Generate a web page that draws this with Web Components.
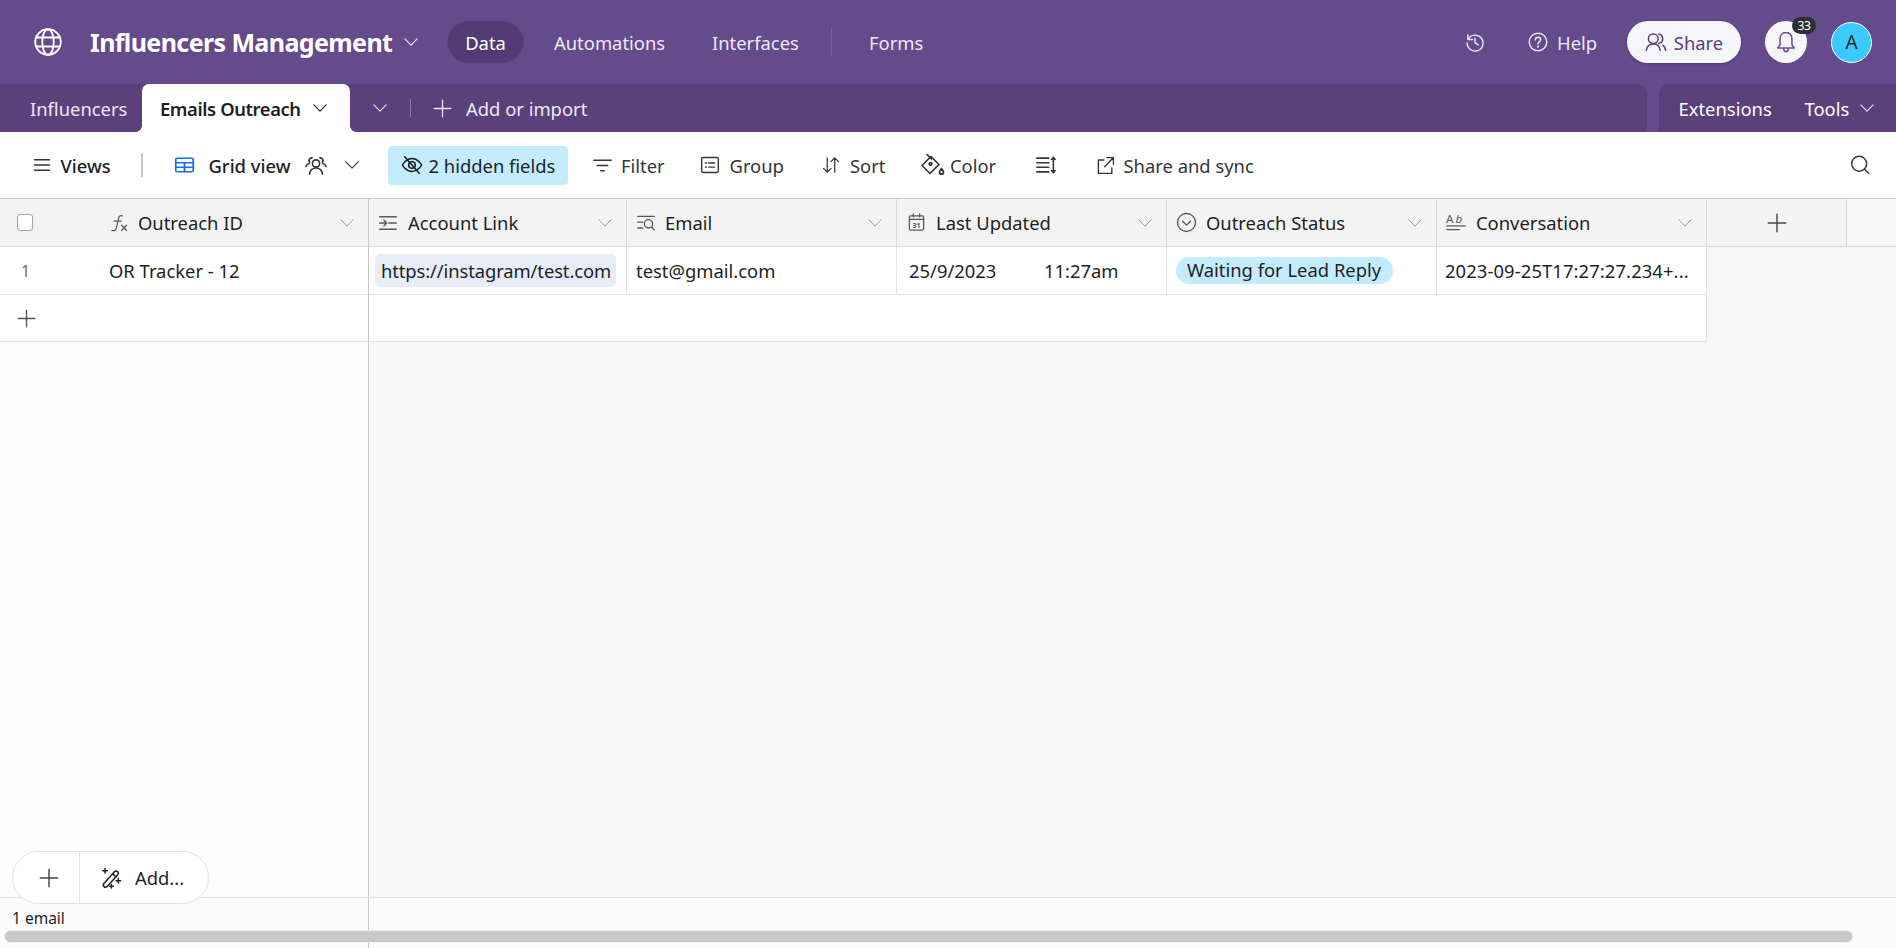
<!DOCTYPE html>
<html lang="en"><head><meta charset="utf-8"><title>Influencers Management</title>
<style>
html,body{margin:0;height:100%;overflow:hidden}
body{font-family:"Noto Sans","Open Sans","Liberation Sans",sans-serif;font-size:18.4px;color:#1d1f25;display:flex;flex-direction:column;height:948px;width:1896px;background:#fff}
</style></head><body>
<app-topbar></app-topbar>
<app-tabbar></app-tabbar>
<app-toolbar></app-toolbar>
<grid-view></grid-view>
<script>
const ICONS={
globe:'<circle cx="12" cy="12" r="10.2"/><ellipse cx="12" cy="12" rx="4.6" ry="10.2"/><path d="M2.8 8.4h18.4M2.8 15.6h18.4"/>',
chevron:'<path d="M1.500 6.500L12 17.500 22.500 6.500"/>',
plus:'<path d="M12 1.500v21M1.500 12h21"/>',
menu:'<path d="M2 5h20M2 12h20M2 19h20"/>',
grid:'<rect x="2" y="3" width="20" height="18" rx="1.8" stroke="#166ee1" stroke-width="2"/><path d="M2 9h20M2 15h20M12 9v12" stroke="#166ee1" stroke-width="2"/>',
people:'<circle cx="12" cy="10.5" r="3.6"/><path d="M5.5 21c.6-4 3-6 6.5-6s5.900 2 6.500 6"/><path d="M8 4.800a2.700 2.700 0 0 0-2.400 4.400M2 13.500c.5-1.600 1.600-2.600 3-3M16 4.800a2.700 2.700 0 0 1 2.400 4.400M22 13.500c-.5-1.600-1.600-2.600-3-3"/>',
eyeoff:'<path d="M1.500 12s3.800-7 10.500-7 10.500 7 10.500 7-3.800 7-10.500 7-10.500-7-10.500-7z"/><circle cx="12" cy="12" r="3.600"/><path d="M4 3l16 18"/>',
filter:'<path d="M2 6h20M6 12h12M10 18h4"/>',
group:'<rect x="2" y="3" width="20" height="18" rx="2"/><path d="M10.500 9.500h7M10.500 14.500h7M6.500 9.500h1.500M6.500 14.500h1.500"/>',
sort:'<path d="M7 2.500v19M2 16.500L7 21.500l5-5M17 21.500v-19M12 7.500l5-5 5 5"/>',
color:'<path d="M11 3.500L2 12.500l8 8 9-9z"/><path d="M7 1.500l4.500 4.500"/><circle cx="10.500" cy="11" r="1.300"/><path d="M21.500 15.500c1.300 1.800 2 2.800 2 3.700a2 2 0 0 1-4 0c0-.9.700-1.900 2-3.700z"/>',
rows:'<path d="M2 4.500h13M2 9.500h13M2 14.500h13M2 19.500h13"/><path d="M20 3.500v17M18 6l2-2.500L22 6M18 18l2 2.500 2-2.500" />',
share:'<path d="M10 5H3v17h17v-7"/><path d="M13.500 2H22v8.500M22 2L11 13.500"/>',
search:'<circle cx="11" cy="10.500" r="9"/><path d="M17.500 17l5 5"/>',
history:'<path d="M3.500 3.500v5.500H9"/><path d="M3.800 8.500A9.600 9.600 0 1 1 2.500 13"/><path d="M12 7v6l4 2.500"/>',
help:'<circle cx="12" cy="12" r="10.500"/><path d="M8.800 9.500c0-1.900 1.400-3.200 3.200-3.200s3.200 1.200 3.200 3c0 2.500-3.200 2.600-3.200 5"/><circle cx="12" cy="17.600" r=".5"/>',
sharepeople:'<circle cx="9" cy="8.500" r="5.300"/><path d="M1.500 21c.5-4 3.300-6.800 7.500-6.800s7 2.800 7.500 6.800"/><path d="M15 3.300a5.300 5.300 0 0 1 0 10.400M19.500 15.500c1.600 1.300 2.600 3.200 3 5.500"/>',
bell:'<path d="M12 1.500c-3.800 0-6.500 3-6.500 7v6.500l-2.500 3.500h18l-2.500-3.500V8.500c0-4-2.700-7-6.500-7z"/><path d="M9.500 19c0 1.900 1.100 3.500 2.500 3.500s2.500-1.600 2.500-3.500"/>',
fx:'<path d="M16.500 2.500c-2.800-1-4.500.2-5 3L8.500 19c-.5 2.800-2.500 3.800-6 3M5.500 9.500h9.500"/><path d="M15.500 15l6.500 7M22 15l-6.500 7" stroke-width="1.800"/>',
link:'<path d="M2 4.500h20M13 12h9M2 19.500h20M2 12h8M7 8.500l3.500 3.500L7 15.500"/>',
emailfield:'<path d="M2 4h20M2 11h6M2 18h6"/><circle cx="15" cy="13" r="5"/><path d="M18.500 16.500L22 20.500"/>',
dropdown:'<circle cx="12" cy="12" r="10.300"/><path d="M7.500 10.500l4.500 4.500 4.500-4.500"/>',
calendar:'<rect x="3" y="3.500" width="18" height="18" rx="1.500"/><path d="M3 8h18M8 1v4M16 1v4"/><text x="12" y="18.500" font-size="9" font-weight="700" text-anchor="middle" fill="currentColor" stroke="none" font-family="Noto Sans">31</text>',
text:'<text x="0" y="12" font-size="14" fill="currentColor" stroke="none" font-family="Noto Sans">A</text><text x="11.500" y="12" font-size="14" font-style="italic" fill="currentColor" stroke="none" font-family="Noto Sans">b</text><path d="M1 15.500h22M1 20h15"/>',
wand:'<rect x="-2" y="-11" width="4.800" height="22" rx="2.400" transform="translate(11.500 13) rotate(42)"/><path d="M14 7.500l3.500 3.500"/><path d="M5.500 1.500v5M3 4h5M20 12.500v5M17.500 15h5M12.500 19v4M10.500 21h4"/>'
};
customElements.define('ui-icon',class extends HTMLElement{
 connectedCallback(){
  const s=this.getAttribute('size')||20,sw=this.getAttribute('sw')||1.7,h=this.getAttribute('h')||s;
  this.attachShadow({mode:'open'}).innerHTML=`<style>:host{display:inline-flex;flex:none;width:${s}px;height:${h}px;align-items:center;justify-content:center}svg{width:100%;height:100%;overflow:visible;display:block}</style><svg viewBox="0 0 24 24" preserveAspectRatio="none" fill="none" stroke="currentColor" stroke-width="${sw}" stroke-linecap="round" stroke-linejoin="round">${ICONS[this.getAttribute('name')]}</svg>`;
 }
});
customElements.define('app-topbar',class extends HTMLElement{
 constructor(){super();this.attachShadow({mode:'open'}).innerHTML=`<style>
 :host{display:flex;flex:none;align-items:center;height:84px;padding-left:33px;padding-right:24px;box-sizing:border-box;background:#634b8c;color:#fff;white-space:nowrap}
 .t{flex:none;display:block;color:#eee9f5}
 .title{margin-left:27px;width:303px;font-size:25px;font-weight:700;color:#fff;letter-spacing:-.6px}
 .data{margin-left:29px;width:77px;height:42px;box-sizing:border-box;border-radius:21px;background:#523b74;border:1px solid #5b4380;display:flex;align-items:center;justify-content:center;flex:none;color:#fff}
 .div{flex:none;width:1px;height:30px;background:#75609a;margin-left:36px}
 .sp{flex:1}
 .share{margin-left:30px;flex:none;width:114px;height:42px;border-radius:21px;background:#f6f5f8;color:#5a417c;display:flex;align-items:center;justify-content:center;gap:7px;box-shadow:0 1px 3px rgba(0,0,0,.2)}
 .bell{margin-left:24px;flex:none;width:42px;height:42px;border-radius:21px;background:#f6f5f8;color:#6a5293;display:flex;align-items:center;justify-content:center;position:relative}
 .badge{position:absolute;left:27px;top:-4px;width:24px;height:17px;border-radius:9px;background:#2f2f33;color:#fff;font-size:12px;line-height:17px;text-align:center;letter-spacing:-.3px}
 .av{margin-left:24px;flex:none;width:41px;height:41px;box-sizing:border-box;border-radius:50%;background:#39caff;border:1.5px solid #fff;color:#1d1f25;display:flex;align-items:center;justify-content:center;font-size:19px}
 </style>
 <ui-icon name="globe" size="30" sw="1.500"></ui-icon>
 <span class="t title">Influencers Management</span>
 <ui-icon name="chevron" size="14" sw="1.800" style="margin-left:11px;color:#eee9f5"></ui-icon>
 <div class="data">Data</div>
 <span class="t" style="margin-left:30px;width:110px">Automations</span>
 <span class="t" style="margin-left:48px;width:83px">Interfaces</span>
 <span class="div"></span>
 <span class="t" style="margin-left:37px;width:52px">Forms</span>
 <span class="sp"></span>
 <ui-icon name="history" size="20" style="color:#eee9f5"></ui-icon>
 <ui-icon name="help" size="20" style="margin-left:43px;color:#eee9f5"></ui-icon>
 <span class="t" style="margin-left:9px;width:40px">Help</span>
 <div class="share"><ui-icon name="sharepeople" size="22"></ui-icon><span>Share</span></div>
 <div class="bell"><ui-icon name="bell" size="22" sw="1.700"></ui-icon><span class="badge">33</span></div>
 <div class="av">A</div>`}
});
customElements.define('app-tabbar',class extends HTMLElement{
 constructor(){super();this.attachShadow({mode:'open'}).innerHTML=`<style>
 :host{display:flex;flex:none;height:48px;background:#634b8c;color:#eee9f5;white-space:nowrap;gap:12px}
 .sec{display:flex;align-items:center;background:#5a417c;height:48px;border-radius:0 10px 0 0}
 .l{width:1647px}
 .r{flex:1;border-radius:10px 0 0 0}
 .t{flex:none;display:block}
 .active{position:relative;flex:none;display:flex;align-items:center;width:208px;height:48px;box-sizing:border-box;padding-left:18px;margin-left:18px;background:#fff;border-radius:7px 7px 0 0;color:#1d1f25;font-weight:600;letter-spacing:-.4px}
 .active:before,.active:after{content:"";position:absolute;bottom:0;width:6px;height:6px;background:radial-gradient(circle at 0 0,transparent 5.500px,#fff 6px)}
 .active:before{left:-6px}
 .active:after{right:-6px;background:radial-gradient(circle at 100% 0,transparent 5.500px,#fff 6px)}
 .div{flex:none;width:1px;height:18px;background:#8a76a8;margin-left:23px}
 </style>
 <div class="sec l">
  <span class="t" style="margin-left:30px;width:94px">Influencers</span>
  <div class="active"><span style="width:154px;flex:none">Emails Outreach</span><ui-icon name="chevron" size="14" sw="2" style="margin-left:-1px"></ui-icon></div>
  <ui-icon name="chevron" size="14" sw="1.800" style="margin-left:23px"></ui-icon>
  <span class="div"></span>
  <ui-icon name="plus" size="19" sw="1.600" style="margin-left:22px"></ui-icon>
  <span class="t" style="margin-left:14px;width:122px">Add or import</span>
 </div>
 <div class="sec r">
  <span class="t" style="margin-left:19.500px;width:90px;color:#fff">Extensions</span>
  <span class="t" style="margin-left:36px;width:44px;color:#fff">Tools</span>
  <ui-icon name="chevron" size="14" sw="1.800" style="margin-left:11px"></ui-icon>
 </div>`}
});
customElements.define('app-toolbar',class extends HTMLElement{
 constructor(){super();this.attachShadow({mode:'open'}).innerHTML=`<style>
 :host{display:flex;flex:none;align-items:center;height:67px;background:#fff;color:#33353b;white-space:nowrap;padding-left:33px;box-sizing:border-box;border-bottom:1.500px solid #d0d0d0}
 .t{flex:none;display:block}
 .b{font-weight:500;color:#1d1f25}
 .div{flex:none;width:2px;height:24px;background:#c9c9c9;margin-left:29px}
 .hid{flex:none;display:flex;align-items:center;margin-left:30px;width:180px;height:39px;box-sizing:border-box;padding-left:13px;border-radius:4px;background:#c4ecff;color:#1d1f25}
 .sp{flex:1}
 </style>
 <ui-icon name="menu" size="18" sw="1.800"></ui-icon>
 <span class="t b" style="margin-left:9.500px;width:51px">Views</span>
 <span class="div"></span>
 <ui-icon name="grid" size="21" h="18" style="margin-left:31px"></ui-icon>
 <span class="t b" style="margin-left:14px;width:83px">Grid view</span>
 <ui-icon name="people" size="24" style="margin-left:12px"></ui-icon>
 <ui-icon name="chevron" size="14" sw="2" style="margin-left:17px"></ui-icon>
 <div class="hid" style="margin-left:29px"><ui-icon name="eyeoff" size="22"></ui-icon><span class="t" style="margin-left:6px;width:128px">2 hidden fields</span></div>
 <ui-icon name="filter" size="21" style="margin-left:24.500px"></ui-icon>
 <span class="t" style="margin-left:8px;width:41px">Filter</span>
 <ui-icon name="group" size="20" style="margin-left:38px"></ui-icon>
 <span class="t" style="margin-left:9.500px;width:53px">Group</span>
 <ui-icon name="sort" size="18" style="margin-left:39.500px"></ui-icon>
 <span class="t" style="margin-left:10px;width:34px">Sort</span>
 <ui-icon name="color" size="24" style="margin-left:35.500px"></ui-icon>
 <span class="t" style="margin-left:6.500px;width:46px">Color</span>
 <ui-icon name="rows" size="22" style="margin-left:38.500px"></ui-icon>
 <ui-icon name="share" size="19" style="margin-left:39px"></ui-icon>
 <span class="t" style="margin-left:9px;width:128px">Share and sync</span>
 <span class="sp"></span>
 <ui-icon name="search" size="20" style="margin-right:26px"></ui-icon>`}
});
customElements.define('grid-head',class extends HTMLElement{
 constructor(){super();const i=this.getAttribute('icon'),w=this.getAttribute('w'),pl=this.getAttribute('pl')||8,iw=this.getAttribute('iw')||20,gap=this.getAttribute('gap')||9;
 this.attachShadow({mode:'open'}).innerHTML=`<style>
 :host{display:flex;flex:none;align-items:center;box-sizing:border-box;width:${w}px;height:100%;border-right:1px solid #d9d9d9;padding-left:${pl}px;padding-right:14px;white-space:nowrap}
 ui-icon{color:#55595f}
 .n{flex:1;padding-left:${gap}px}
 .c{color:#8a8d93}
 </style><ui-icon name="${i}" size="${iw}" sw="1.600"></ui-icon><span class="n"><slot></slot></span><ui-icon class="c" name="chevron" size="14" sw="1.500"></ui-icon>`}
});
customElements.define('grid-cell',class extends HTMLElement{
 constructor(){super();const w=this.getAttribute('w'),pl=this.getAttribute('pl')||8;
 this.attachShadow({mode:'open'}).innerHTML=`<style>
 :host{display:flex;flex:none;align-items:center;box-sizing:border-box;width:${w}px;height:100%;border-right:1px solid #e3e3e3;padding-left:${pl}px;white-space:nowrap;overflow:hidden}
 </style><slot></slot>`}
});
customElements.define('add-pill',class extends HTMLElement{
 constructor(){super();this.attachShadow({mode:'open'}).innerHTML=`<style>
 :host{position:absolute;left:12px;top:-47px;width:197px;height:53px;box-sizing:border-box;border:1.500px solid #e3e3e3;border-radius:27px;background:#fff;display:flex;align-items:center;color:#1d1f25;z-index:3}
 .a{width:67px;height:100%;box-sizing:border-box;border-right:1.500px solid #e3e3e3;display:flex;align-items:center;justify-content:center;padding-left:6px;color:#41454d}
 .b{display:flex;align-items:center;padding-left:20px;gap:13px}
 </style><div class="a"><ui-icon name="plus" size="20" sw="1.700"></ui-icon></div><div class="b"><ui-icon name="wand" size="22" sw="1.600"></ui-icon><span>Add...</span></div>`}
});
customElements.define('grid-view',class extends HTMLElement{
 constructor(){super();this.attachShadow({mode:'open'}).innerHTML=`<style>
 :host{display:flex;flex-direction:column;flex:1;min-height:0;position:relative;background:#f7f7f7}
 .main{flex:1;display:flex;min-height:0}
 .left{flex:none;width:369px;box-sizing:border-box;background:#fcfcfc;border-right:1px solid #c8c8c8}
 .right{flex:1;min-width:0}
 .row{display:flex;box-sizing:border-box}
 .h{height:48px;background:#f3f3f3;border-bottom:1.500px solid #d6d6d6}
 .d{height:48px;background:#fff;border-bottom:1.500px solid #e3e3e3}
 .a{height:47px;background:#fff;border-bottom:1.500px solid #e3e3e3;align-items:center;padding-left:17px;color:#555}
 .right .a{width:1338px;border-right:1px solid #e3e3e3;padding:0}
 .check{width:16px;height:17px;box-sizing:border-box;border:1.300px solid #a5a5a5;border-radius:3px;background:#fff;margin-left:17px;flex:none;align-self:center}
 .pn{flex:none;align-self:center;color:#6d6f75;margin-left:21px;font-size:16px;width:88px}
 .chip{display:block;height:33px;line-height:33px;width:241px;box-sizing:border-box;padding-left:6px;border-radius:5px;background:#e8ecf7;letter-spacing:-.1px}
 .pill{display:block;height:27px;line-height:26px;width:217px;box-sizing:border-box;padding-left:11px;border-radius:14px;background:#c4ecff}
 .foot{flex:none;height:51px;display:flex;background:#fbfbfb;border-top:1.500px solid #e3e3e3;box-sizing:border-box;position:relative}
 .fl{width:369px;box-sizing:border-box;border-right:1px solid #c8c8c8;padding:10px 0 0 12px;font-size:15.500px;line-height:20px}
 .scroll{position:absolute;left:4px;right:43px;top:32px;height:13px;box-sizing:border-box;background:#c8c8c8;border:1px solid #efefef;border-radius:7px;z-index:2}
 .fill{flex:1;background:#f7f7f7}
 .col{display:flex;flex-direction:column}
 </style>
 <div class="main">
  <div class="left col">
   <div class="row h"><span class="check"></span><span style="flex:none;width:59px"></span>
     <grid-head icon="fx" iw="18" w="317" pl="59" gap="10" style="border-right:0;margin-left:-41px">Outreach ID</grid-head></div>
   <div class="row d"><span class="pn" style="width:88px">1</span><span style="align-self:center">OR Tracker - 12</span></div>
   <div class="row a"><ui-icon name="plus" size="19" sw="1.700"></ui-icon></div>
  </div>
  <div class="right col">
   <div class="row h">
    <grid-head icon="link" w="258" pl="9" gap="10">Account Link</grid-head>
    <grid-head icon="emailfield" w="270" pl="9" gap="9">Email</grid-head>
    <grid-head icon="calendar" iw="19" w="270" pl="10" gap="10">Last Updated</grid-head>
    <grid-head icon="dropdown" iw="21" w="270" pl="9" gap="9">Outreach Status</grid-head>
    <grid-head icon="text" iw="20" w="270" pl="9" gap="10">Conversation</grid-head>
    <div style="flex:none;width:140px;box-sizing:border-box;border-right:1px solid #d9d9d9;display:flex;align-items:center;justify-content:center;color:#41454d"><ui-icon name="plus" size="20" sw="1.700"></ui-icon></div>
    <div style="flex:1;background:#f7f7f7"></div>
   </div>
   <div class="row d" style="width:1338px">
    <grid-cell w="258" pl="6"><span class="chip">https://instagram/test.com</span></grid-cell>
    <grid-cell w="270" pl="9">test@gmail.com</grid-cell>
    <grid-cell w="270" pl="12"><span style="width:135px;flex:none">25/9/2023</span><span>11:27am</span></grid-cell>
    <grid-cell w="270" pl="9"><span class="pill">Waiting for Lead Reply</span></grid-cell>
    <grid-cell w="270" pl="8" style="letter-spacing:.1px">2023-09-25T17:27:27.234+...</grid-cell>
   </div>
   <div class="row a"></div>
   <div class="fill"></div>
  </div>
 </div>
 <div class="foot"><add-pill></add-pill><div class="fl">1 email</div><div class="scroll"></div></div>`}
});
</script>
</body></html>
